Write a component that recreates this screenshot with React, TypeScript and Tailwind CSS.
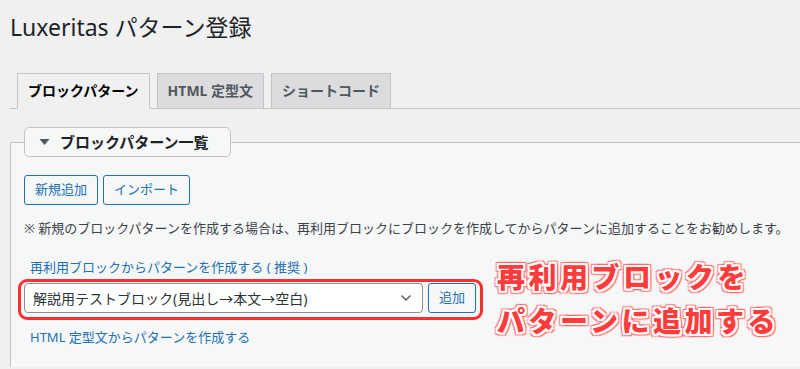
import { ChevronDown } from "lucide-react";

const font = "font-['Noto_Sans','Noto_Sans_CJK_JP',sans-serif]";

const TABS = [
  { label: "ブロックパターン", active: true },
  { label: "HTML 定型文", active: false },
  { label: "ショートコード", active: false },
];

export default function App() {
  return (
    <div className={`${font} min-h-[369px] w-[800px] overflow-hidden bg-[#f0f0f1] pl-[10px] text-[#3c434a]`}>
      {/* title */}
      <h1 className="pt-[12px] text-[23px] leading-[30px] font-normal text-[#1d2327]">
        Luxeritas パターン登録
      </h1>

      {/* tabs */}
      <div className="mt-[31px] flex border-b border-[#c3c4c7]">
        {TABS.map((t) => (
          <div
            key={t.label}
            className={
              t.active
                ? "-mb-px ml-[7px] border border-[#c3c4c7] border-b-[#f0f0f1] bg-[#f0f0f1] px-[10px] py-[5px] text-[14px] leading-[24px] font-bold text-black"
                : "-mb-px ml-[7px] border border-[#c3c4c7] bg-[#dcdcde] px-[10px] py-[5px] text-[14px] leading-[24px] font-bold text-[#50575e]"
            }
          >
            {t.label}
          </div>
        ))}
      </div>

      {/* panel */}
      <fieldset className="mt-[18px] min-h-[240px] border-t border-l border-[#c3c4c7] bg-[#f6f7f7] px-[13px]">
        <legend className="flex h-[30px] w-[207px] items-center rounded-[5px] border border-[#c3c4c7] bg-[#f6f7f7] pl-[14px] text-[15px] font-bold text-[#1d2327]">
          <svg viewBox="0 0 10 6" className="mr-[10px] h-[6px] w-[11px]" fill="#50575e">
            <path d="M0 0h10L5 6z" />
          </svg>
          ブロックパターン一覧
        </legend>

        <div className="mt-[18px] flex gap-[5px]">
          <button className="h-[30px] rounded-[3px] border border-[#2271b1] bg-[#f6f7f7] px-[10px] text-[13px] text-[#2271b1]">
            新規追加
          </button>
          <button className="h-[30px] rounded-[3px] border border-[#2271b1] bg-[#f6f7f7] px-[10px] text-[13px] text-[#2271b1]">
            インポート
          </button>
        </div>

        <p className="mt-[13px] text-[13px] leading-[20px] whitespace-nowrap text-[#3c434a]">
          ※ 新規のブロックパターンを作成する場合は、再利用ブロックにブロックを作成してからパターンに追加することをお勧めします。
        </p>

        <div className="relative">
          <p className="mt-[19px] pl-[6px] text-[13px] leading-[20px] text-[#2271b1]">
            再利用ブロックからパターンを作成する ( 推奨 )
          </p>

          <div className="relative mt-[6px] flex gap-[5px]">
            <div className="flex h-[30px] w-[399px] items-center justify-between rounded-[4px] border border-[#8c8f94] bg-white pr-[8px] pl-[8px] text-[14px] text-[#2c3338]">
              <span>解説用テストブロック(見出し→本文→空白)</span>
              <ChevronDown className="h-[16px] w-[16px] text-[#50575e]" strokeWidth={2} />
            </div>
            <button className="h-[30px] rounded-[3px] border border-[#2271b1] bg-[#f6f7f7] px-[10px] text-[13px] text-[#2271b1]">
              追加
            </button>
            {/* annotation frame */}
            <div className="pointer-events-none absolute top-[-4px] left-[-6px] h-[41px] w-[465px] rounded-[9px] border-[3px] border-[#ff2f2f]" />
          </div>

          <p className="mt-[14px] pl-[6px] text-[13px] leading-[20px] text-[#2271b1]">
            HTML 定型文からパターンを作成する
          </p>

          {/* annotation text */}
          <div className="absolute top-[-2px] left-[473px] text-[28px] leading-[44px] font-black tracking-[3.5px] text-[#ff3c3c] [text-shadow:2px_0_0_#fff,-2px_0_0_#fff,0_2px_0_#fff,0_-2px_0_#fff,2px_2px_0_#fff,-2px_-2px_0_#fff,2px_-2px_0_#fff,-2px_2px_0_#fff,3px_0_1px_#ff6a6a,-3px_0_1px_#ff6a6a,0_3px_1px_#ff6a6a,0_-3px_1px_#ff6a6a,3px_3px_1px_#ff6a6a,-3px_-3px_1px_#ff6a6a,3px_-3px_1px_#ff6a6a,-3px_3px_1px_#ff6a6a]">
            <div>再利用ブロックを</div>
            <div>パターンに追加する</div>
          </div>
        </div>
      </fieldset>
    </div>
  );
}
